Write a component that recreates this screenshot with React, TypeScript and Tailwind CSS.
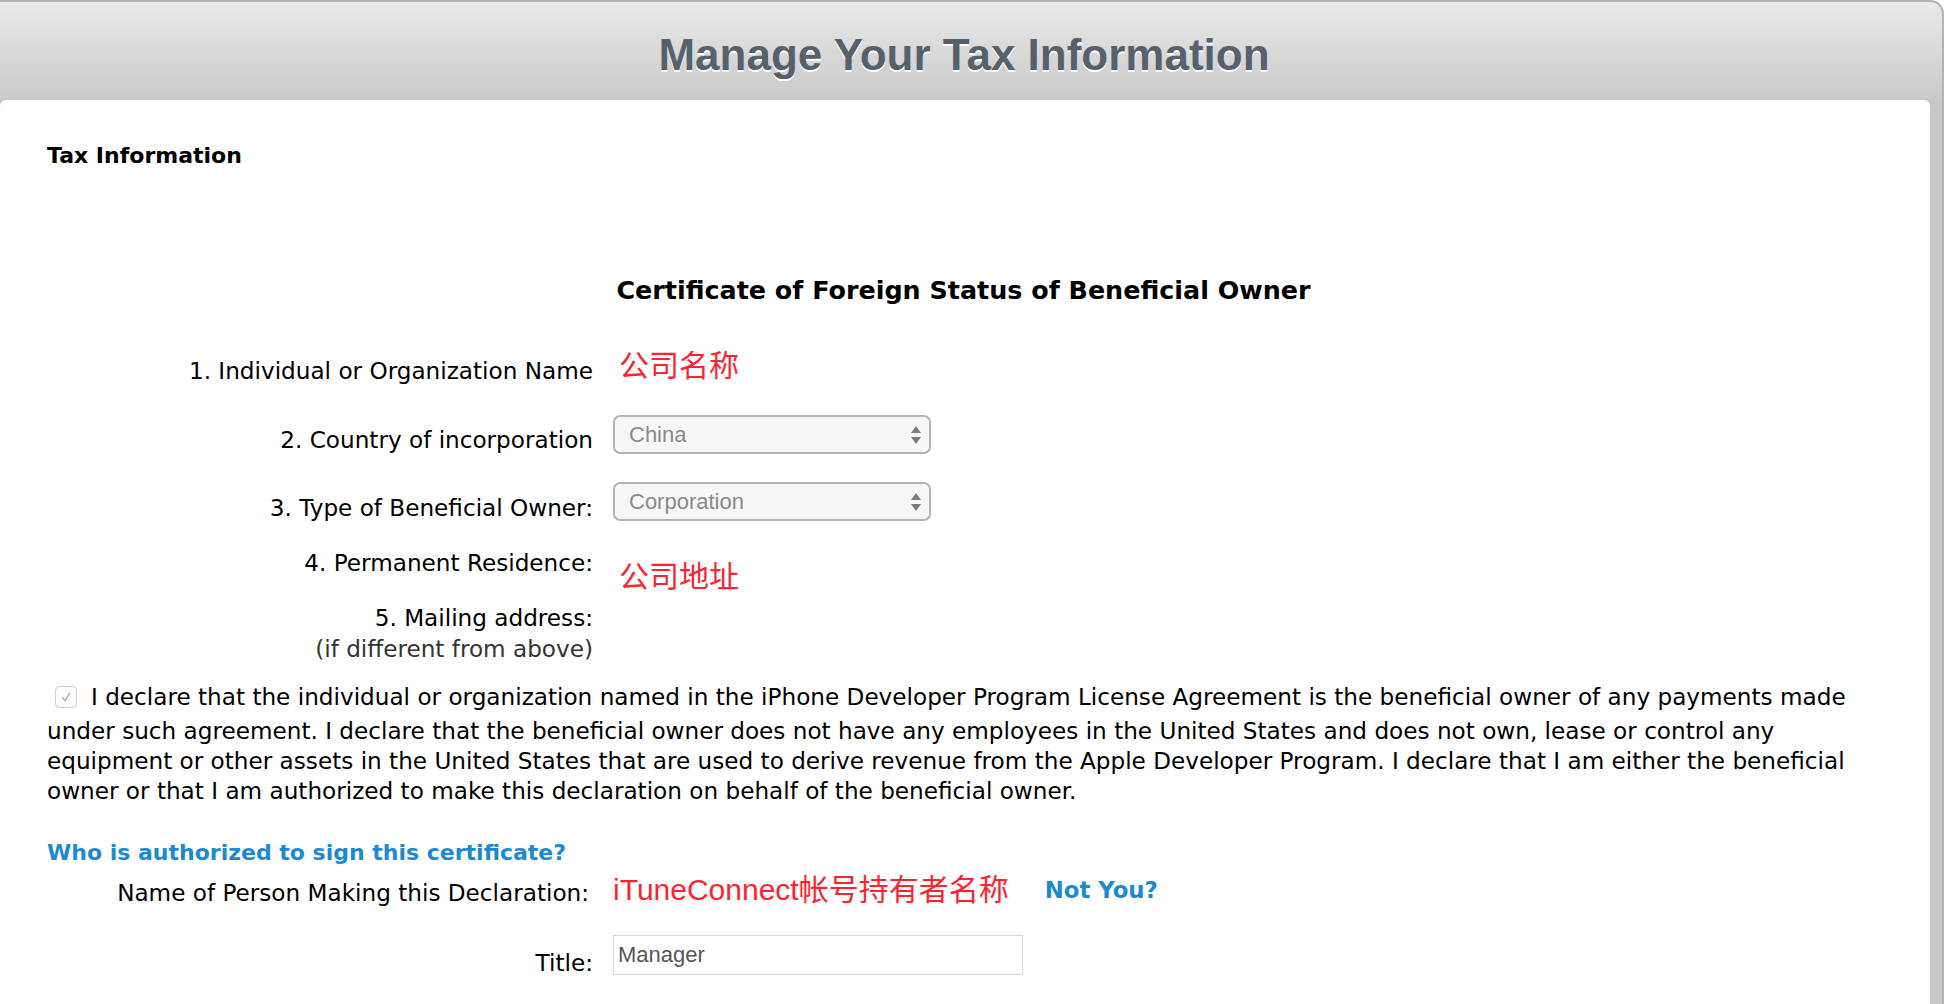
import React from "react";

const body = { fontFamily: '"DejaVu Sans", "Noto Sans CJK SC", sans-serif' };
const cjk = { fontFamily: '"Liberation Sans", "Noto Sans CJK SC", sans-serif' };
const helv = { fontFamily: '"Liberation Sans", Arial, sans-serif' };

function SelectBox({ value }: { value: string }) {
  return (
    <div className="flex h-[39px] w-[318px] items-center justify-between rounded-[7px] border-2 border-[#b4b4b4] bg-[#f7f7f7] pl-[14px] pr-[7px]">
      <span className="text-[22px] leading-none text-[#8a8a8a]" style={helv}>
        {value}
      </span>
      <svg width="12" height="20" viewBox="0 0 12 20" className="text-[#7b7b7b]">
        <path d="M6 1 L11 8 L1 8 Z" fill="currentColor" />
        <path d="M1 12 L11 12 L6 19 Z" fill="currentColor" />
      </svg>
    </div>
  );
}

export default function App() {
  return (
    <div className="h-[1004px] w-[1944px] overflow-hidden bg-white" style={body}>
      <div className="flex h-full flex-col rounded-tr-[14px] border-r-2 border-t-2 border-[#b3b3b3] bg-[#c8c8c8]">
        <header className="flex h-[98px] shrink-0 items-center justify-center rounded-tr-[12px] bg-gradient-to-b from-[#eaeaea] to-[#c9c9c9] pr-[14px] pt-[8px]">
          <h1
            className="text-[44px] font-bold leading-none text-[#56616b] [text-shadow:0_2px_0_#ffffff]"
            style={helv}
          >
            Manage Your Tax Information
          </h1>
        </header>
        <div className="flex flex-1">
          <main className="mr-[12px] flex-1 rounded-t-[6px] bg-white pl-[47px] pr-[50px] text-[23.15px] leading-[30px] text-black">
            <div className="mt-[41px] text-[22px] font-bold">Tax Information</div>

            <div className="mt-[104px] text-center text-[25.4px] font-bold">
              Certificate of Foreign Status of Beneficial Owner
            </div>

            {/* Row 1 */}
            <div className="mt-[46px] flex items-start">
              <div className="mt-[5px] w-[546px] text-right">1. Individual or Organization Name</div>
              <div className="ml-[26px] text-[30px] leading-[30px] text-[#fb2430]" style={cjk}>
                公司名称
              </div>
            </div>

            {/* Row 2 */}
            <div className="mt-[29px] flex items-start">
              <div className="mt-[10px] w-[546px] text-right">2. Country of incorporation</div>
              <div className="ml-[20px]">
                <SelectBox value="China" />
              </div>
            </div>

            {/* Row 3 */}
            <div className="mt-[27px] flex items-start">
              <div className="mt-[11px] w-[546px] text-right">3. Type of Beneficial Owner:</div>
              <div className="ml-[20px]">
                <SelectBox value="Corporation" />
              </div>
            </div>

            {/* Row 4 */}
            <div className="mt-[25px] flex items-start">
              <div className="w-[546px] text-right">4. Permanent Residence:</div>
              <div className="ml-[26px] mt-[14px] text-[30px] leading-[30px] text-[#fb2430]" style={cjk}>
                公司地址
              </div>
            </div>

            {/* Row 5 */}
            <div className="mt-[11px] flex items-start">
              <div className="w-[546px] text-right">
                <div>5. Mailing address:</div>
                <div className="mt-[1px] text-[#333333]">(if different from above)</div>
              </div>
            </div>

            {/* Declaration */}
            <div className="mt-[18px]">
              <div className="flex h-[30px] items-center whitespace-nowrap">
                <span className="ml-[8px] mr-[14px] flex h-[22px] w-[22px] items-center justify-center rounded-[4px] border border-[#cfcfcf] bg-[#fbfbfb]">
                  <svg width="12" height="12" viewBox="0 0 12 12">
                    <path d="M2.2 6.4 L5 9.6 L9.8 2" fill="none" stroke="#a6a6a6" strokeWidth="1.3" />
                  </svg>
                </span>
                <span>
                  I declare that the individual or organization named in the iPhone Developer Program License Agreement is the beneficial owner of any payments made
                </span>
              </div>
              <div className="mt-[4px] whitespace-nowrap">
                under such agreement. I declare that the beneficial owner does not have any employees in the United States and does not own, lease or control any
                <br />
                equipment or other assets in the United States that are used to derive revenue from the Apple Developer Program. I declare that I am either the beneficial
                <br />
                owner or that I am authorized to make this declaration on behalf of the beneficial owner.
              </div>
            </div>

            <div className="mt-[32px] text-[22px] font-bold text-[#1b8ad3]">
              Who is authorized to sign this certificate?
            </div>

            {/* Name row */}
            <div className="mt-[7px] flex items-start">
              <div className="mt-[3px] w-[546px] pr-[4px] text-right">Name of Person Making this Declaration:</div>
              <div className="ml-[20px] text-[30px] leading-[30px] text-[#fb2430]" style={cjk}>
                iTuneConnect帐号持有者名称
              </div>
              <div className="ml-[36px] text-[22.8px] font-bold text-[#1b8ad3]">Not You?</div>
            </div>

            {/* Title row */}
            <div className="mt-[27px] flex items-start">
              <div className="mt-[13px] w-[546px] text-right">Title:</div>
              <div className="ml-[20px] flex h-[40px] w-[410px] items-center border border-[#d8d8d8] pl-[4px]">
                <span className="text-[22px] leading-none text-[#555555]" style={helv}>
                  Manager
                </span>
              </div>
            </div>

            <div className="mt-[26px] border-t-2 border-[#9b9b9b]" />
          </main>
        </div>
      </div>
    </div>
  );
}
